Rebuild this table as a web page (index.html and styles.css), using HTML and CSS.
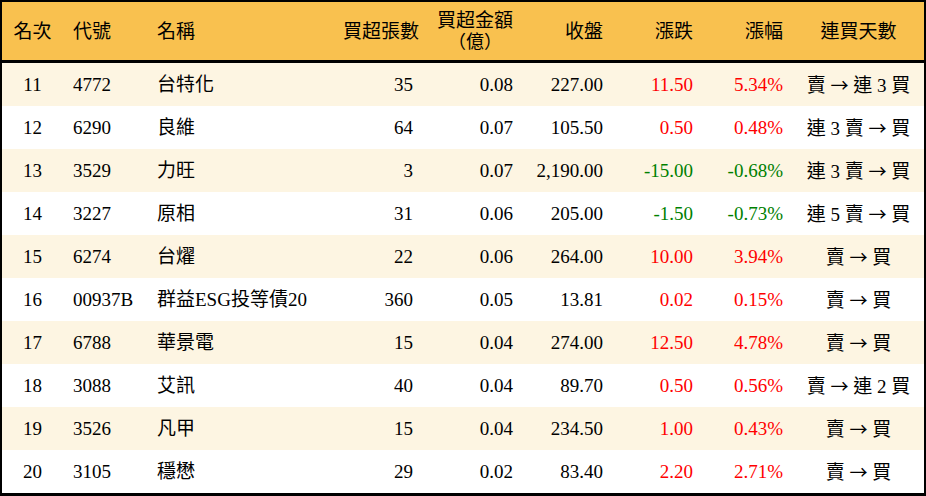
FILE: index.html
```html
<!DOCTYPE html>
<html lang="zh-Hant">
<head>
<meta charset="utf-8">
<title>買超排行</title>
<link rel="stylesheet" href="styles.css">
</head>
<body>
<div class="board">
  <table class="rank">
    <colgroup>
      <col class="c-rank"><col class="c-code"><col class="c-name"><col class="c-vol"><col class="c-amt"><col class="c-close"><col class="c-chg"><col class="c-pct"><col class="c-days">
    </colgroup>
    <thead>
      <tr>
        <th class="center">名次</th>
        <th class="left">代號</th>
        <th class="left">名稱</th>
        <th class="right">買超張數</th>
        <th class="right two">買超金額<br><span class="sub">（億）</span></th>
        <th class="right">收盤</th>
        <th class="right">漲跌</th>
        <th class="right">漲幅</th>
        <th class="center">連買天數</th>
      </tr>
    </thead>
    <tbody>
      <tr class="odd"><td class="center">11</td><td class="left">4772</td><td class="left">台特化</td><td class="right">35</td><td class="right">0.08</td><td class="right">227.00</td><td class="right up">11.50</td><td class="right up">5.34%</td><td class="center">賣 <span class="arrow">→</span> 連 3 買</td></tr>
      <tr><td class="center">12</td><td class="left">6290</td><td class="left">良維</td><td class="right">64</td><td class="right">0.07</td><td class="right">105.50</td><td class="right up">0.50</td><td class="right up">0.48%</td><td class="center">連 3 賣 <span class="arrow">→</span> 買</td></tr>
      <tr class="odd"><td class="center">13</td><td class="left">3529</td><td class="left">力旺</td><td class="right">3</td><td class="right">0.07</td><td class="right">2,190.00</td><td class="right down">-15.00</td><td class="right down">-0.68%</td><td class="center">連 3 賣 <span class="arrow">→</span> 買</td></tr>
      <tr><td class="center">14</td><td class="left">3227</td><td class="left">原相</td><td class="right">31</td><td class="right">0.06</td><td class="right">205.00</td><td class="right down">-1.50</td><td class="right down">-0.73%</td><td class="center">連 5 賣 <span class="arrow">→</span> 買</td></tr>
      <tr class="odd"><td class="center">15</td><td class="left">6274</td><td class="left">台燿</td><td class="right">22</td><td class="right">0.06</td><td class="right">264.00</td><td class="right up">10.00</td><td class="right up">3.94%</td><td class="center">賣 <span class="arrow">→</span> 買</td></tr>
      <tr><td class="center">16</td><td class="left">00937B</td><td class="left">群益ESG投等債20</td><td class="right">360</td><td class="right">0.05</td><td class="right">13.81</td><td class="right up">0.02</td><td class="right up">0.15%</td><td class="center">賣 <span class="arrow">→</span> 買</td></tr>
      <tr class="odd"><td class="center">17</td><td class="left">6788</td><td class="left">華景電</td><td class="right">15</td><td class="right">0.04</td><td class="right">274.00</td><td class="right up">12.50</td><td class="right up">4.78%</td><td class="center">賣 <span class="arrow">→</span> 買</td></tr>
      <tr><td class="center">18</td><td class="left">3088</td><td class="left">艾訊</td><td class="right">40</td><td class="right">0.04</td><td class="right">89.70</td><td class="right up">0.50</td><td class="right up">0.56%</td><td class="center">賣 <span class="arrow">→</span> 連 2 買</td></tr>
      <tr class="odd"><td class="center">19</td><td class="left">3526</td><td class="left">凡甲</td><td class="right">15</td><td class="right">0.04</td><td class="right">234.50</td><td class="right up">1.00</td><td class="right up">0.43%</td><td class="center">賣 <span class="arrow">→</span> 買</td></tr>
      <tr><td class="center">20</td><td class="left">3105</td><td class="left">穩懋</td><td class="right">29</td><td class="right">0.02</td><td class="right">83.40</td><td class="right up">2.20</td><td class="right up">2.71%</td><td class="center">賣 <span class="arrow">→</span> 買</td></tr>
    </tbody>
  </table>
</div>
</body>
</html>
```

FILE: styles.css
```css
html, body {
  margin: 0;
  padding: 0;
  background: #ffffff;
}

.board {
  width: 926px;
  height: 496px;
  box-sizing: border-box;
  border: 2px solid #000000;
  border-bottom-width: 3px;
  overflow: hidden;
  font-family: "Liberation Serif", "Noto Sans CJK TC", serif;
  color: #000000;
}

.rank {
  width: 922px;
  table-layout: fixed;
  border-collapse: separate;
  border-spacing: 0;
}

.c-rank { width: 61px; }
.c-code { width: 84px; }
.c-name { width: 186px; }
.c-vol { width: 90px; }
.c-amt { width: 100px; }
.c-close { width: 90px; }
.c-chg { width: 90px; }
.c-pct { width: 90px; }
.c-days { width: 131px; }

.rank th {
  background: #f9c14f;
  height: 58px;
  padding: 0 10px;
  border-bottom: 3px solid #000000;
  font-weight: 400;
  font-size: 19px;
  line-height: 21px;
  white-space: nowrap;
}

.rank th.two {
  text-align: center;
  padding-right: 6px;
}

.rank th .sub {
  display: inline-block;
  font-size: 18px;
}

.rank td {
  height: 43px;
  padding: 0 10px;
  font-size: 19px;
  line-height: 22px;
  white-space: nowrap;
}

.rank tr.odd td {
  background: #fdf5e2;
}

.left { text-align: left; }
.right { text-align: right; }
.center { text-align: center; }

.rank td.center { padding: 0 4px; }

.arrow {
  font-family: "Noto Sans CJK TC", sans-serif;
  font-size: 18px;
}

.up { color: #ff0000; }
.down { color: #008000; }
```
